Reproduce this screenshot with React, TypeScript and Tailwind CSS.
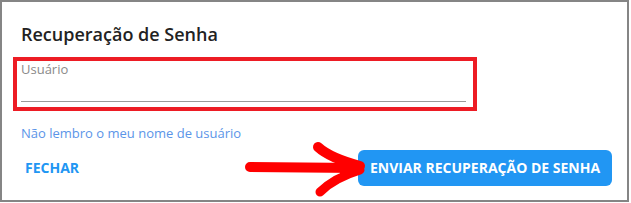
export default function App() {
  return (
    <div className="relative w-[631px] h-[203px] bg-white" style={{ fontFamily: '"Open Sans", "Noto Sans", sans-serif' }}>
      <div className="relative w-[629px] h-[202px] border-2 border-[#858585] bg-white pl-[19px] pr-[15px] pt-[20px]">
        <h2 className="text-[18px] leading-[24px] font-semibold text-[#222]">Recuperação de Senha</h2>

        <div className="mt-[15px] w-[445px]">
          <div className="text-[13px] leading-[16px] text-[#8a8a8a]">Usuário</div>
          <div className="h-[25px] border-b border-[#9a9a9a]" />
        </div>

        <a className="mt-[23px] block text-[13px] leading-[16px] text-[#5b95e8]">Não lembro o meu nome de usuário</a>

        <div className="mt-[9px] flex items-center justify-between">
          <button className="pl-[4px] text-[14px] leading-[20px] font-bold text-[#2196f3]">FECHAR</button>
          <button className="h-[36px] w-[254px] rounded-[6px] bg-[#2196f3] text-[14px] leading-[20px] font-bold text-white">
            ENVIAR RECUPERAÇÃO DE SENHA
          </button>
        </div>

        {/* annotation box */}
        <div className="absolute left-[11px] top-[55px] w-[464px] h-[54px] border-[4px] border-[#ed1c24] pointer-events-none" />
      </div>

      {/* annotation arrow */}
      <svg className="absolute left-0 top-0 pointer-events-none" width="631" height="203" viewBox="0 0 631 203">
        <g stroke="#ff0000" strokeLinecap="round" strokeLinejoin="round" fill="none">
          <path d="M250 167 L358 168" strokeWidth="10" />
          <path d="M318 147 Q330 158 360 166" strokeWidth="10" />
          <path d="M320 192 Q334 178 360 170" strokeWidth="9" />
        </g>
        <path d="M340 160 L362 166 L362 171 L340 177 Z" fill="#ff0000" />
      </svg>
    </div>
  );
}
